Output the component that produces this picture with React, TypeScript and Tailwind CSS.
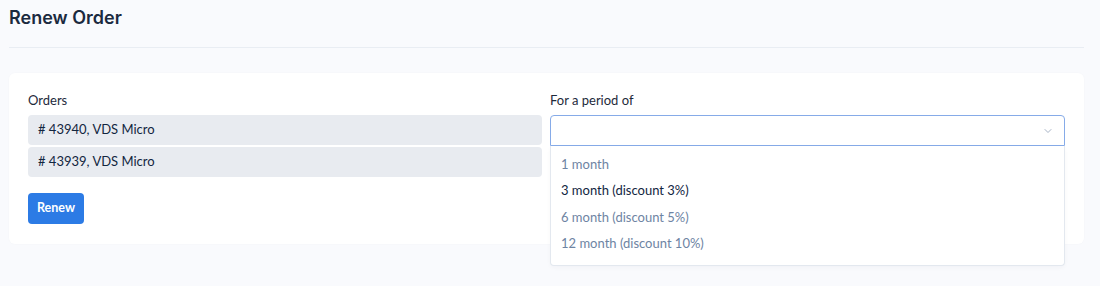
import { ChevronDown } from "lucide-react";

const orders = ["# 43940, VDS Micro", "# 43939, VDS Micro"];

const periods = [
  { label: "1 month", active: false },
  { label: "3 month (discount 3%)", active: true },
  { label: "6 month (discount 5%)", active: false },
  { label: "12 month (discount 10%)", active: false },
];

export default function App() {
  return (
    <div
      className="min-h-[286px] bg-[#f9fafd] px-[9px] pt-[6px] text-[#12263f]"
      style={{ fontFamily: "Lato, Inter, sans-serif" }}
    >
      <h1
        className="text-[18px] font-semibold leading-[24px] text-[#1b2a3f]"
        style={{ fontFamily: "Inter, sans-serif" }}
      >
        Renew Order
      </h1>
      <div className="mt-[17px] mr-[7px] h-px bg-[#e9edf3]" />

      <div className="mt-[25px] mr-[7px] rounded-md bg-white px-[19px] pt-[20px] pb-[20px] shadow-[0_0_2px_rgba(18,38,63,0.03)]">
        <div className="grid grid-cols-[514px_1fr] gap-[8px]">
          <div>
            <div className="mb-[8px] text-[13px] leading-[14px] text-[#1e2a3b]">Orders</div>
            <div className="flex flex-col gap-[2px]">
              {orders.map((o) => (
                <div
                  key={o}
                  className="flex h-[30px] items-center rounded-[4px] bg-[#e8ebf0] px-[10px] text-[13px] text-[#12263f]"
                >
                  {o}
                </div>
              ))}
            </div>
            <button className="mt-[16px] h-[31px] rounded-[4px] bg-[#2c7be5] px-[9px] text-[12.5px] font-bold text-white">
              Renew
            </button>
          </div>

          <div className="relative">
            <div className="mb-[8px] text-[13px] leading-[14px] text-[#1e2a3b]">For a period of</div>
            <div className="flex h-[31px] items-center justify-end rounded-t-[4px] border border-[#86abe8] px-[10px]">
              <ChevronDown className="h-[12px] w-[12px] text-[#a7b3c6]" strokeWidth={2} />
            </div>
            <div className="absolute left-0 right-0 top-[53px] z-10 rounded-b-[4px] border border-t-0 border-[#e3e8ef] bg-white pt-[5px] pb-[8px] shadow-[0_2px_4px_rgba(18,38,63,0.03)]">
              {periods.map((p) => (
                <div
                  key={p.label}
                  className={`flex h-[26.5px] items-center px-[10px] text-[13px] ${
                    p.active ? "text-[#12263f]" : "text-[#6e84a3]"
                  }`}
                >
                  {p.label}
                </div>
              ))}
            </div>
          </div>
        </div>
      </div>
    </div>
  );
}
